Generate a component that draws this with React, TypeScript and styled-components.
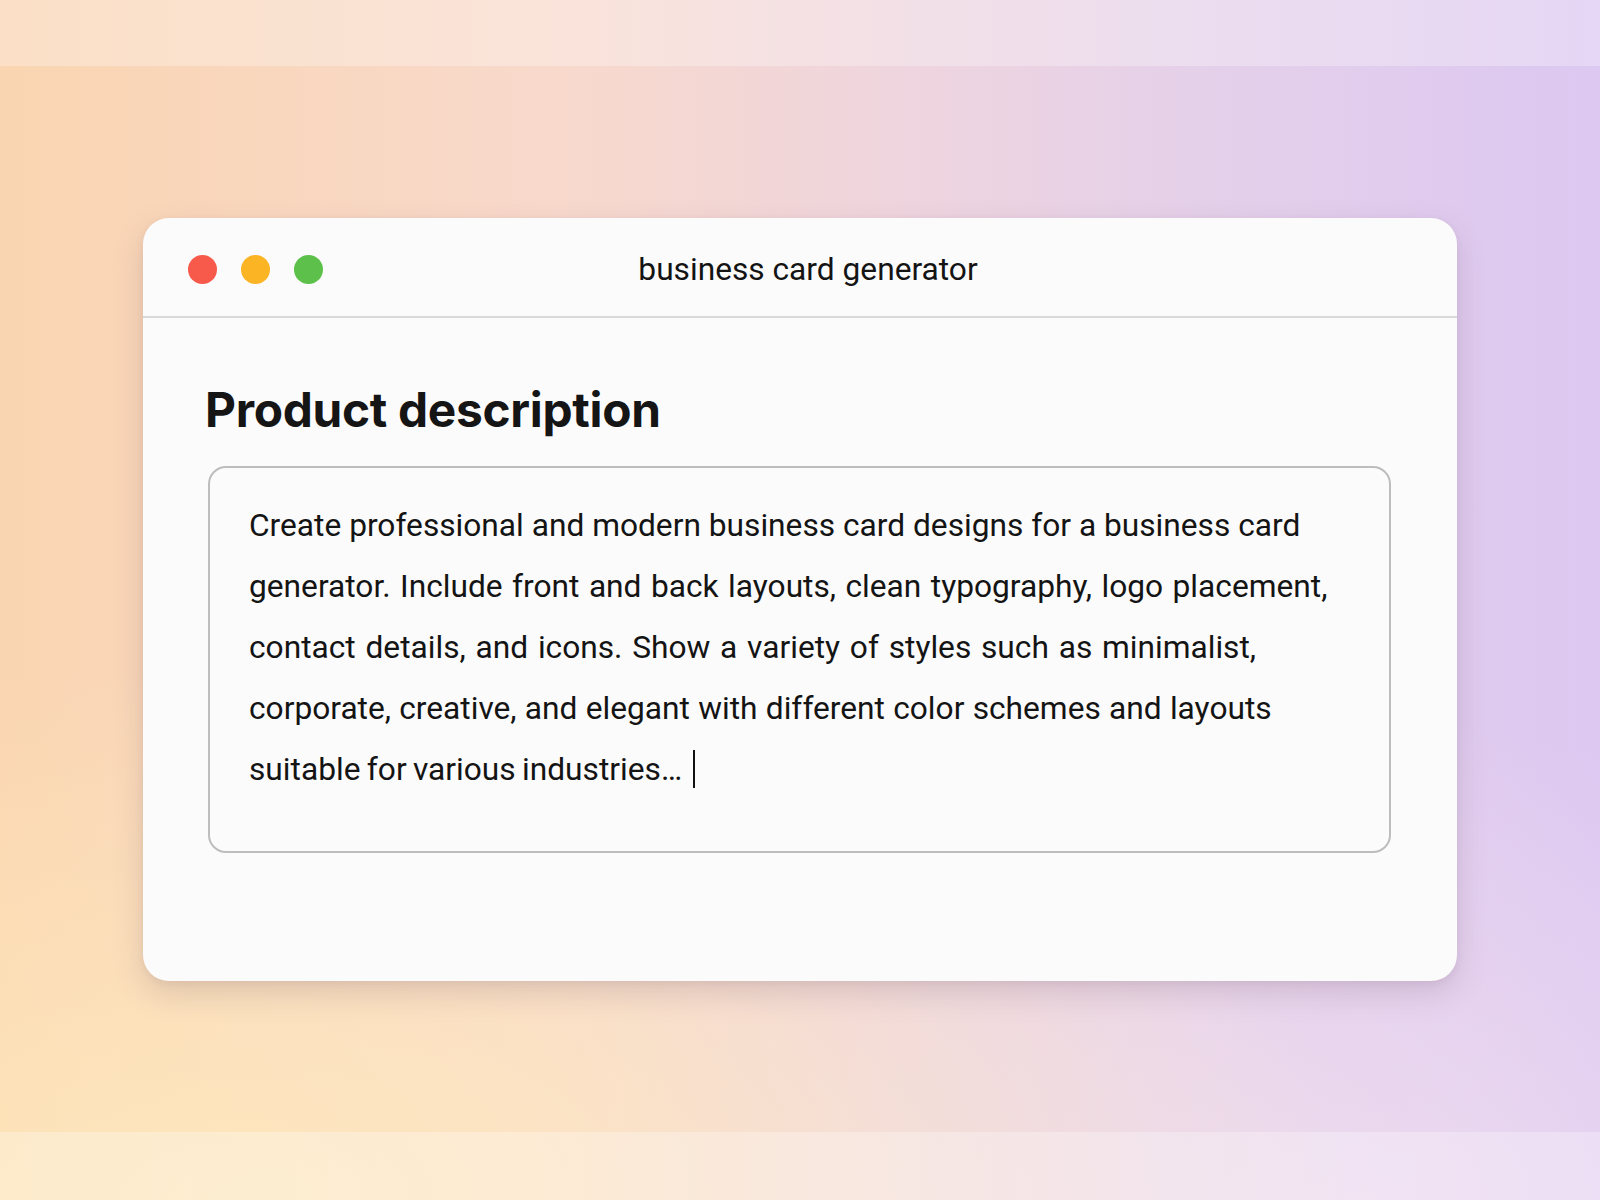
import React from 'react';
import styled, { createGlobalStyle } from 'styled-components';

const GlobalStyle = createGlobalStyle`
  html, body {
    margin: 0;
    padding: 0;
  }
  body {
    font-family: Roboto, "Liberation Sans", sans-serif;
    color: #161616;
  }
`;

const Page = styled.div`
  width: 1600px;
  height: 1200px;
  display: flex;
  flex-direction: column;
  background:
    radial-gradient(ellipse 70% 45% at 15% 100%, rgba(255, 236, 190, 0.75), rgba(255, 236, 190, 0) 100%),
    radial-gradient(ellipse 50% 40% at 85% 100%, rgba(245, 228, 240, 0.55), rgba(245, 228, 240, 0) 100%),
    linear-gradient(90deg, #fad5b1 0%, #f8d9cc 35%, #efd5dd 55%, #e5d0ea 75%, #dcc8f1 100%);
  overflow: hidden;
`;

const Strip = styled.div<{ $h: number }>`
  height: ${(p) => p.$h}px;
  flex: none;
  background: rgba(255, 255, 255, 0.28);
`;

const Stage = styled.main`
  flex: 1;
  display: flex;
  align-items: center;
  justify-content: center;
`;

const Window = styled.section`
  width: 1314px;
  height: 763px;
  background: #fbfbfb;
  border-radius: 26px;
  box-shadow: 0 12px 30px rgba(120, 90, 110, 0.22), 0 2px 6px rgba(120, 90, 110, 0.08);
  display: flex;
  flex-direction: column;
  overflow: hidden;
`;

const TitleBar = styled.header`
  height: 98px;
  flex: none;
  display: grid;
  grid-template-columns: 1fr auto 1fr;
  align-items: center;
  padding: 0 45px;
  border-bottom: 2px solid #d9d9d9;
`;

const Lights = styled.div`
  display: flex;
  gap: 24px;
  margin-top: 5px;
`;

const Light = styled.span<{ $c: string }>`
  width: 29px;
  height: 29px;
  border-radius: 50%;
  background: ${(p) => p.$c};
`;

const Title = styled.h1`
  margin: 6px 0 0 16px;
  font-size: 31.7px;
  font-weight: 400;
  color: #141414;
`;

const Body = styled.div`
  padding: 60px 66px 0 65px;
  display: flex;
  flex-direction: column;
`;

const Heading = styled.h2`
  margin: 0 0 0 -3px;
  font-family: Inter, Roboto, sans-serif;
  font-size: 47.8px;
  line-height: 64px;
  font-weight: 700;
  letter-spacing: -0.3px;
  color: #151515;
`;

const TextBox = styled.div`
  margin-top: 24px;
  height: 387px;
  box-sizing: border-box;
  border: 2px solid #bdbdbd;
  border-radius: 18px;
  padding: 27px 24px 0 39px;
  font-size: 31.7px;
  line-height: 61px;
  color: #141414;
`;

const Line = styled.div<{ $ws?: number }>`
  white-space: nowrap;
  word-spacing: ${(p) => p.$ws ?? 0}px;
`;

const Caret = styled.span`
  display: inline-block;
  width: 2px;
  height: 38px;
  margin-left: 11px;
  background: #111;
  vertical-align: -8px;
`;

const lines: { text: string; ws: number }[] = [
  { text: 'Create professional and modern business card designs for a business card', ws: 0 },
  { text: 'generator. Include front and back layouts, clean typography, logo placement,', ws: 1.6 },
  { text: 'contact details, and icons. Show a variety of styles such as minimalist,', ws: 1.9 },
  { text: 'corporate, creative, and elegant with different color schemes and layouts', ws: 0.4 },
];

export default function App() {
  return (
    <>
      <GlobalStyle />
      <Page>
        <Strip $h={66} />
        <Stage>
          <Window>
            <TitleBar>
              <Lights>
                <Light $c="#f7594b" />
                <Light $c="#fbb424" />
                <Light $c="#5cc04b" />
              </Lights>
              <Title>business card generator</Title>
              <span />
            </TitleBar>
            <Body>
              <Heading>Product description</Heading>
              <TextBox>
                {lines.map((l) => (
                  <Line key={l.text} $ws={l.ws}>
                    {l.text}
                  </Line>
                ))}
                <Line $ws={-1.5}>
                  suitable for various industries…
                  <Caret />
                </Line>
              </TextBox>
            </Body>
          </Window>
        </Stage>
        <Strip $h={68} />
      </Page>
    </>
  );
}
